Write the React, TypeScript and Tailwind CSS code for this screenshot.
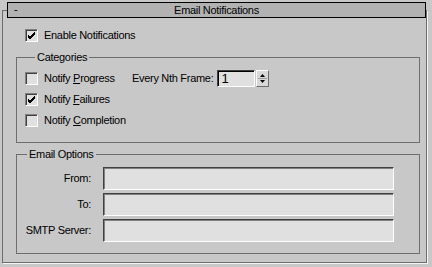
import React from "react";

const font = { fontFamily: '"Liberation Sans", Arial, sans-serif' };

function Check({ checked }: { checked?: boolean }) {
  return (
    <div className="w-[13px] h-[13px] shrink-0 border border-t-[#808080] border-l-[#808080] border-b-white border-r-white bg-[#e0e0e0] shadow-[inset_1px_1px_0_#404040] flex items-center justify-center">
      {checked && (
        <svg width="9" height="9" viewBox="0 0 9 9">
          <path d="M1 4 L3 6 L8 1 M1 5 L3 7 L8 2 M1 6 L3 8 L8 3" stroke="#000" strokeWidth="1" fill="none" shapeRendering="crispEdges" />
        </svg>
      )}
    </div>
  );
}

function Field() {
  return (
    <div className="w-[291px] h-[23px] border border-t-[#404040] border-l-[#404040] border-b-white border-r-white bg-[#e0e0e0] shadow-[inset_1px_1px_0_#808080]" />
  );
}

export default function App() {
  return (
    <div className="w-[432px] h-[267px] bg-[#c8c8c8] overflow-hidden pt-[10px] text-[11px] tracking-[-0.3px] text-black leading-[13px]" style={font}>
      <div className="ml-[2px] w-[425px] border border-[#6e6e6e] shadow-[1px_1px_0_#f4f4f4] pb-[8px]">
        <div className="-mt-[9px] ml-[4px] w-[419px] h-[16px] border border-black bg-[#b2b2b2] relative flex items-center justify-center">
          <span className="absolute left-[6px] top-[0px]">-</span>
          <span>Email Notifications</span>
        </div>
        <div className="mt-[11px] ml-[22px] h-[13px] flex items-center">
          <Check checked />
          <span className="ml-[6px]">Enable Notifications</span>
        </div>
        <fieldset className="mt-[9px] ml-[13px] w-[404px] border border-[#6e6e6e] pl-[8px] pt-[4px] pb-[11px]">
          <legend className="ml-[10px] px-[2px] leading-[13px]">Categories</legend>
          <div className="h-[21px] flex items-center">
            <Check />
            <span className="ml-[6px] w-[88px]">
              Notify <u>P</u>rogress
            </span>
            <span>Every Nth Frame:</span>
            <div className="ml-[4px] w-[38px] h-[17px] border border-t-[#404040] border-l-[#404040] border-b-white border-r-white bg-[#e0e0e0] shadow-[inset_1px_1px_0_#000] flex items-center pl-[3px] text-[13px]">
              1
            </div>
            <div className="ml-[1px] w-[13px] h-[17px] border border-t-white border-l-white border-b-[#6e6e6e] border-r-[#6e6e6e] bg-[#d8d8d8] flex flex-col items-center justify-center">
              <svg width="11" height="15" viewBox="0 0 11 15">
                <path d="M5.5 3 L8 6 L3 6 Z" fill="#000" />
                <line x1="1" y1="7.5" x2="10" y2="7.5" stroke="#a0a0a0" strokeWidth="1" />
                <path d="M3 9 L8 9 L5.5 12 Z" fill="#000" />
              </svg>
            </div>
          </div>
          <div className="h-[21px] flex items-center">
            <Check checked />
            <span className="ml-[6px]">
              Notify <u>F</u>ailures
            </span>
          </div>
          <div className="h-[21px] flex items-center">
            <Check />
            <span className="ml-[6px]">
              Notify <u>C</u>ompletion
            </span>
          </div>
        </fieldset>
        <fieldset className="mt-[5px] ml-[13px] w-[404px] border border-[#6e6e6e] pt-[6px] pb-[11px] flex flex-col gap-[3px]">
          <legend className="ml-[10px] px-[2px] leading-[13px]">Email Options</legend>
          <div className="flex items-center gap-[12px]">
            <span className="w-[74px] text-right">From:</span>
            <Field />
          </div>
          <div className="flex items-center gap-[12px]">
            <span className="w-[74px] text-right">To:</span>
            <Field />
          </div>
          <div className="flex items-center gap-[12px]">
            <span className="w-[74px] text-right">SMTP Server:</span>
            <Field />
          </div>
        </fieldset>
      </div>
    </div>
  );
}
